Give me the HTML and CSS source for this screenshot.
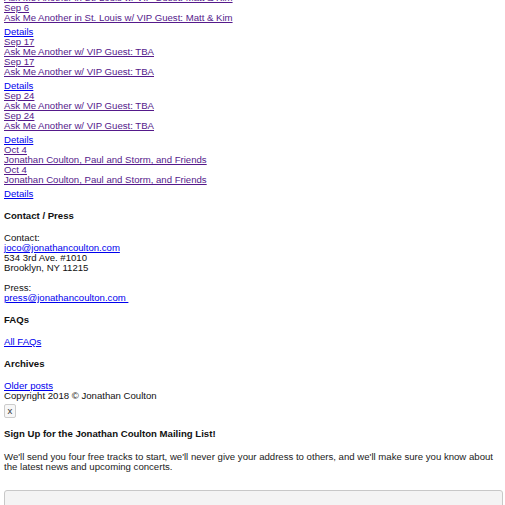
FILE: index.html
```html
<!DOCTYPE html>
<html>
<head>
<meta charset="utf-8">
<link rel="stylesheet" href="styles.css">
</head>
<body>
<div class="page">
  <ul class="shows">
    <li class="show first">
      <a class="seen" href="#">Ask Me Another in St. Louis w/ VIP Guest: Matt &amp; Kim</a>
      <a class="seen" href="#">Sep 6</a>
      <a class="seen" href="#">Ask Me Another in St. Louis w/ VIP Guest: Matt &amp; Kim</a>
      <a class="details" href="#">Details</a>
    </li>
    <li class="show">
      <a class="seen" href="#">Sep 17</a>
      <a class="seen" href="#">Ask Me Another w/ VIP Guest: TBA</a>
      <a class="seen" href="#">Sep 17</a>
      <a class="seen" href="#">Ask Me Another w/ VIP Guest: TBA</a>
      <a class="details" href="#">Details</a>
    </li>
    <li class="show">
      <a class="seen" href="#">Sep 24</a>
      <a class="seen" href="#">Ask Me Another w/ VIP Guest: TBA</a>
      <a class="seen" href="#">Sep 24</a>
      <a class="seen" href="#">Ask Me Another w/ VIP Guest: TBA</a>
      <a class="details" href="#">Details</a>
    </li>
    <li class="show">
      <a class="seen" href="#">Oct 4</a>
      <a class="seen" href="#">Jonathan Coulton, Paul and Storm, and Friends</a>
      <a class="seen" href="#">Oct 4</a>
      <a class="seen" href="#">Jonathan Coulton, Paul and Storm, and Friends</a>
      <a class="details" href="#">Details</a>
    </li>
  </ul>

  <section class="widget">
    <h3 class="widget-title">Contact / Press</h3>
    <p class="widget-text">Contact:<br><a class="link" href="#">joco@jonathancoulton.com</a><br>534 3rd Ave. #1010<br>Brooklyn, NY 11215<br><br>Press:<br><a class="link" href="#">press@jonathancoulton.com&nbsp;</a></p>
  </section>

  <section class="widget">
    <h3 class="widget-title">FAQs</h3>
    <p class="widget-text"><a class="link" href="#">All FAQs</a></p>
  </section>

  <section class="widget">
    <h3 class="widget-title archives">Archives</h3>
    <p class="widget-text"><a class="link" href="#">Older posts</a></p>
  </section>

  <footer class="footer">Copyright 2018 © Jonathan Coulton</footer>
  <button class="close" type="button">x</button>

  <section class="signup">
    <h3 class="widget-title">Sign Up for the Jonathan Coulton Mailing List!</h3>
    <p class="signup-text">We'll send you four free tracks to start, we'll never give your address to others, and we'll make sure you know about the latest news and upcoming concerts.</p>
    <input class="email" type="text">
  </section>
</div>
</body>
</html>
```
FILE: styles.css
```css
html, body {
  margin: 0;
  padding: 0;
  background: #fff;
}
body {
  font-family: "Liberation Sans", Arial, sans-serif;
  font-size: 9.6px;
  line-height: 10px;
  color: #111;
}
.page {
  padding: 0 2px 0 4px;
}
.shows {
  list-style: none;
  margin: -7px 0 0 0;
  padding: 0;
}
.show {
  display: flex;
  flex-direction: column;
  align-items: flex-start;
}
.seen {
  color: #551a8b;
}
.details {
  color: #0000ee;
  margin-top: 4px;
}
.widget-title {
  font-size: 9.6px;
  font-weight: bold;
  line-height: 10px;
  margin: 12px 0 12px;
}
.archives {
  margin-bottom: 12px;
}
.widget-text {
  margin: 0;
}
.link {
  color: #0000ee;
}
.footer {
  display: block;
}
.close {
  display: block;
  margin: 3px 0 0 0;
  padding: 0 2px;
  width: 12px;
  height: 14px;
  font-family: "Liberation Sans", Arial, sans-serif;
  font-size: 9.6px;
  line-height: 10px;
  color: #333;
  background: #f7f7f7;
  border: 1px solid #ccc;
  border-radius: 2px;
}
.signup .widget-title {
  margin-top: 11px;
  margin-bottom: 13px;
}
.signup-text {
  margin: 0;
  color: #222;
}
.email {
  display: block;
  box-sizing: border-box;
  width: 100%;
  height: 30px;
  margin-top: 18px;
  border: 1px solid #c8c8c8;
  border-radius: 3px;
  background: #f4f4f4;
}
```
